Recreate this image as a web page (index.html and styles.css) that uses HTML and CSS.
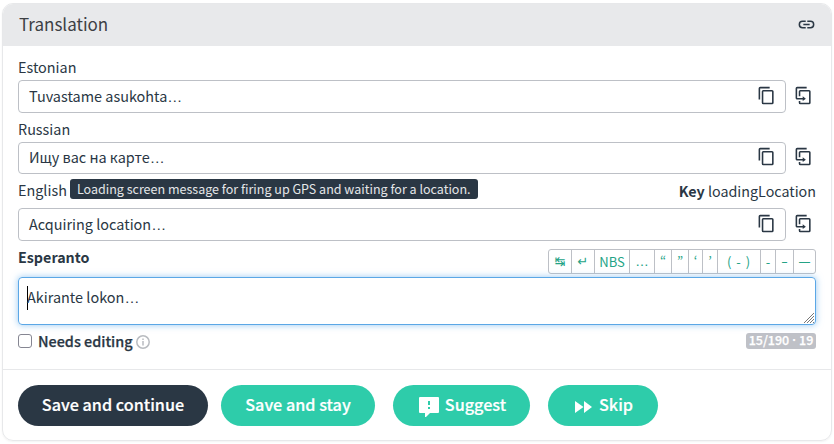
FILE: index.html
```html
<!DOCTYPE html>
<html lang="en">
<head>
<meta charset="utf-8">
<title>Translation</title>
<link rel="stylesheet" href="styles.css">
</head>
<body>
<svg class="sprite" aria-hidden="true">
  <symbol id="copy" viewBox="0 0 24 24"><path d="M19 21H8V7h11m0-2H8a2 2 0 0 0-2 2v14a2 2 0 0 0 2 2h11a2 2 0 0 0 2-2V7a2 2 0 0 0-2-2m-3-4H4a2 2 0 0 0-2 2v14h2V3h12V1Z"/></symbol>
  <symbol id="clone" viewBox="0 0 24 24"><path d="M11 17H4a2 2 0 0 1-2-2V3a2 2 0 0 1 2-2h12v2H4v12h7v-2l4 3-4 3v-2m8 4V7H8v6H6V7a2 2 0 0 1 2-2h11a2 2 0 0 1 2 2v14a2 2 0 0 1-2 2H8a2 2 0 0 1-2-2v-2h2v2h11Z"/></symbol>
</svg>
<main class="card">
  <header class="head"><span class="title">Translation</span>
    <svg class="icon" viewBox="0 0 24 24"><path d="M3.9 12A3.1 3.1 0 0 1 7 8.9h4V7H7a5 5 0 0 0 0 10h4v-1.900H7A3.100 3.100 0 0 1 3.900 12M8 13h8v-2H8v2m9-6h-4v1.900h4a3.100 3.100 0 0 1 0 6.200h-4V17h4a5 5 0 0 0 0-10Z"/></svg>
  </header>
  <section class="body">
    <div class="label"><span>Estonian</span></div>
    <div class="row"><div class="field"><span>Tuvastame asukohta<span class="dots">…</span></span><svg class="icon"><use href="#copy"/></svg></div><svg class="icon"><use href="#clone"/></svg></div>
    <div class="label second"><span>Russian</span></div>
    <div class="row short"><div class="field"><span>Ищу вас на карте<span class="dots">…</span></span><svg class="icon"><use href="#copy"/></svg></div><svg class="icon"><use href="#clone"/></svg></div>
    <div class="label third"><span>English</span><span class="tip">Loading screen message for firing up GPS and waiting for a location.</span><span class="key"><b>Key</b> loadingLocation</span></div>
    <div class="row last"><div class="field"><span>Acquiring location<span class="dots">…</span></span><svg class="icon"><use href="#copy"/></svg></div><svg class="icon"><use href="#clone"/></svg></div>
    <div class="target"><b>Esperanto</b>
      <div class="tools"><span class="sym">↹</span><span class="sym">↵</span><span>NBS</span><span class="sym">…</span><span class="q">“</span><span class="q">”</span><span class="q">‘</span><span class="q">’</span><span class="hy">( - )</span><span>-</span><span class="dash">–</span><span class="dash">—</span></div>
    </div>
    <div class="editor"><i class="caret"></i><span>Akirante lokon<span class="dots">…</span></span>
      <svg class="grip" viewBox="0 0 12 12"><path d="M1 11 11 1M4 11l7-7M7 11l4-4M10 11l1-1"/></svg>
    </div>
    <div class="status"><span class="check"></span><span class="needs">Needs editing</span>
      <svg class="info" viewBox="0 0 14 14"><circle cx="7" cy="7" r="6.200"/><path d="M7 6v4.500M7 3.500v1.500"/></svg>
      <span class="count">15/190 · 19</span>
    </div>
  </section>
  <footer class="foot">
    <span class="btn dark">Save and continue</span>
    <span class="btn stay">Save and stay</span>
    <span class="btn suggest"><svg class="bubble" viewBox="0 0 20 20"><path fill-rule="evenodd" d="M1 0h18a1 1 0 0 1 1 1v14a1 1 0 0 1-1 1h-8l-4 4H6v-4H1a1 1 0 0 1-1-1V1a1 1 0 0 1 1-1Zm8 4v4h2V4Zm0 6v2h2v-2Z"/></svg>Suggest</span>
    <span class="btn skip"><svg class="ff" viewBox="0 0 17 12"><path d="M0 0l8.500 6L0 12ZM9 0l8 6-8 6Z"/></svg>Skip</span>
  </footer>
</main>
</body>
</html>
```
FILE: styles.css
```css
* { box-sizing: border-box; }
body { margin: 0; padding: 3px 2px; background: #fff; color: #2a3744; font: 15px/20px "Noto Sans CJK SC", "Noto Sans", sans-serif; white-space: nowrap; }
.sprite { position: absolute; width: 0; height: 0; }
.card { height: 438px; width: 830px; border: 1px solid #e7e8ea; border-radius: 11px; overflow: hidden; box-shadow: 0 1px 2px #0000000d; }
.head { height: 42px; background: #e8e9eb; display: flex; align-items: center; justify-content: space-between; padding: 0 15px 2px 16px; color: #3d4044; font-size: 17px; }
.icon { width: 19px; height: 19px; fill: #2a3744; flex: none; }
.body { height: 323px; padding: 11px 15px 0; }
.label { height: 23px; display: flex; align-items: center; font-size: 14.4px; padding-bottom: 3px; }
.row { height: 33px; display: flex; gap: 8px; align-items: center; }
.field { width: 768px; height: 100%; border: 1px solid #bdc0c6; border-radius: 4px; padding: 0 9.500px 2px 10px; display: flex; align-items: center; justify-content: space-between; font-size: 14.45px; }
.row .icon { margin-bottom: 3px; }
.field .icon { margin-bottom: 1px; }
.second { height: 29px; padding: 3px 0 0; }
.short { height: 32px; }
.third { height: 34px; padding-bottom: 2px; }
.tip { background: #2a3744; color: #e4e6e8; border-radius: 3px; height: 20px; width: 408px; margin-left: 3px; padding-left: 7px; font-size: 12.530px; line-height: 20px; margin-bottom: 2px; }
.key { margin-left: auto; font-size: 14.3px; padding-top: 1px; }
.dots { font-family: "Liberation Sans", sans-serif; font-size: 15px; line-height: 1; }
.target { height: 36px; display: flex; justify-content: space-between; font-size: 14.3px; padding-top: 6px; }
.tools { display: grid; grid-template-columns: 22px 23px 35px 25px 17px 17px 14px 15px 43px 15px 18px 22px; height: 25px; width: 268px; margin-top: 2px; border: 1px solid #bdc0c6; border-radius: 3px; color: #24a386; font-size: 13px; line-height: 23px; text-align: center; }
.tools span + span { border-left: 1px solid #bdc0c6; }
.tools .sym { font-family: "DejaVu Sans", sans-serif; }
.tools .q { font-family: "Noto Sans CJK KR", sans-serif; line-height: 21px; }
.tools .dash { font-family: "Noto Sans", sans-serif; font-size: 12px; }
.tools .hy { letter-spacing: 1px; }
.editor { height: 48px; width: 798px; border: 1px solid #5ba7e6; border-radius: 4px; box-shadow: 0 0 7px #64aeedaa; position: relative; display: flex; padding: 8px 0 0 8px; font-size: 14.45px; line-height: 24px; }
.editor > span { margin-top: -1px; }
.caret { width: 1px; height: 24px; background: #000; margin-right: -1px; }
.grip { position: absolute; right: 0; bottom: 0; width: 12px; height: 12px; fill: none; stroke: #777; }
.status { display: flex; align-items: center; height: 33px; font-weight: bold; font-size: 14.5px; }
.check { width: 14px; height: 14px; border: 1px solid #858692; border-radius: 3px; margin: 0 6px 1px 0; }
.needs { font-weight: 500; -webkit-text-stroke: .25px currentColor; font-size: 14.4px; margin-bottom: 1px; }
.info { width: 14px; height: 14px; margin: 1px 0 0 3px; fill: none; stroke: #b8bbc0; stroke-width: 1.500; }
.count { width: 70px; height: 16px; margin: 0 0 2px auto; background: #bfc1c7; border-radius: 3px; color: #fff; font-weight: 500; font-family: "Noto Sans CJK KR", sans-serif; -webkit-text-stroke: .25px #fff; font-size: 12.5px; word-spacing: -1.500px; line-height: 14px; text-align: center; }
.foot { border-top: 1px solid #e7e8ea; display: flex; padding: 15px 15px 0; }
.btn { height: 41px; border-radius: 21px; background: #2eccaa; color: #fff; display: flex; align-items: center; justify-content: center; font-size: 16.2px; font-weight: 500; -webkit-text-stroke: .2px #fff; padding-bottom: 3px; }
.dark { width: 190px; background: #2a3744; }
.stay { width: 154px; margin-left: 13px; }
.suggest { width: 137px; margin-left: 18px; padding-left: 2px; }
.skip { width: 110px; margin-left: 18px; padding-left: 2px; }
.bubble { width: 20px; height: 20px; margin: 5px 6px 0 0; fill: #fff; stroke: none; }
.ff { width: 17px; height: 12px; margin: 5px 7px 0 0; fill: #fff; stroke: none; }
```
